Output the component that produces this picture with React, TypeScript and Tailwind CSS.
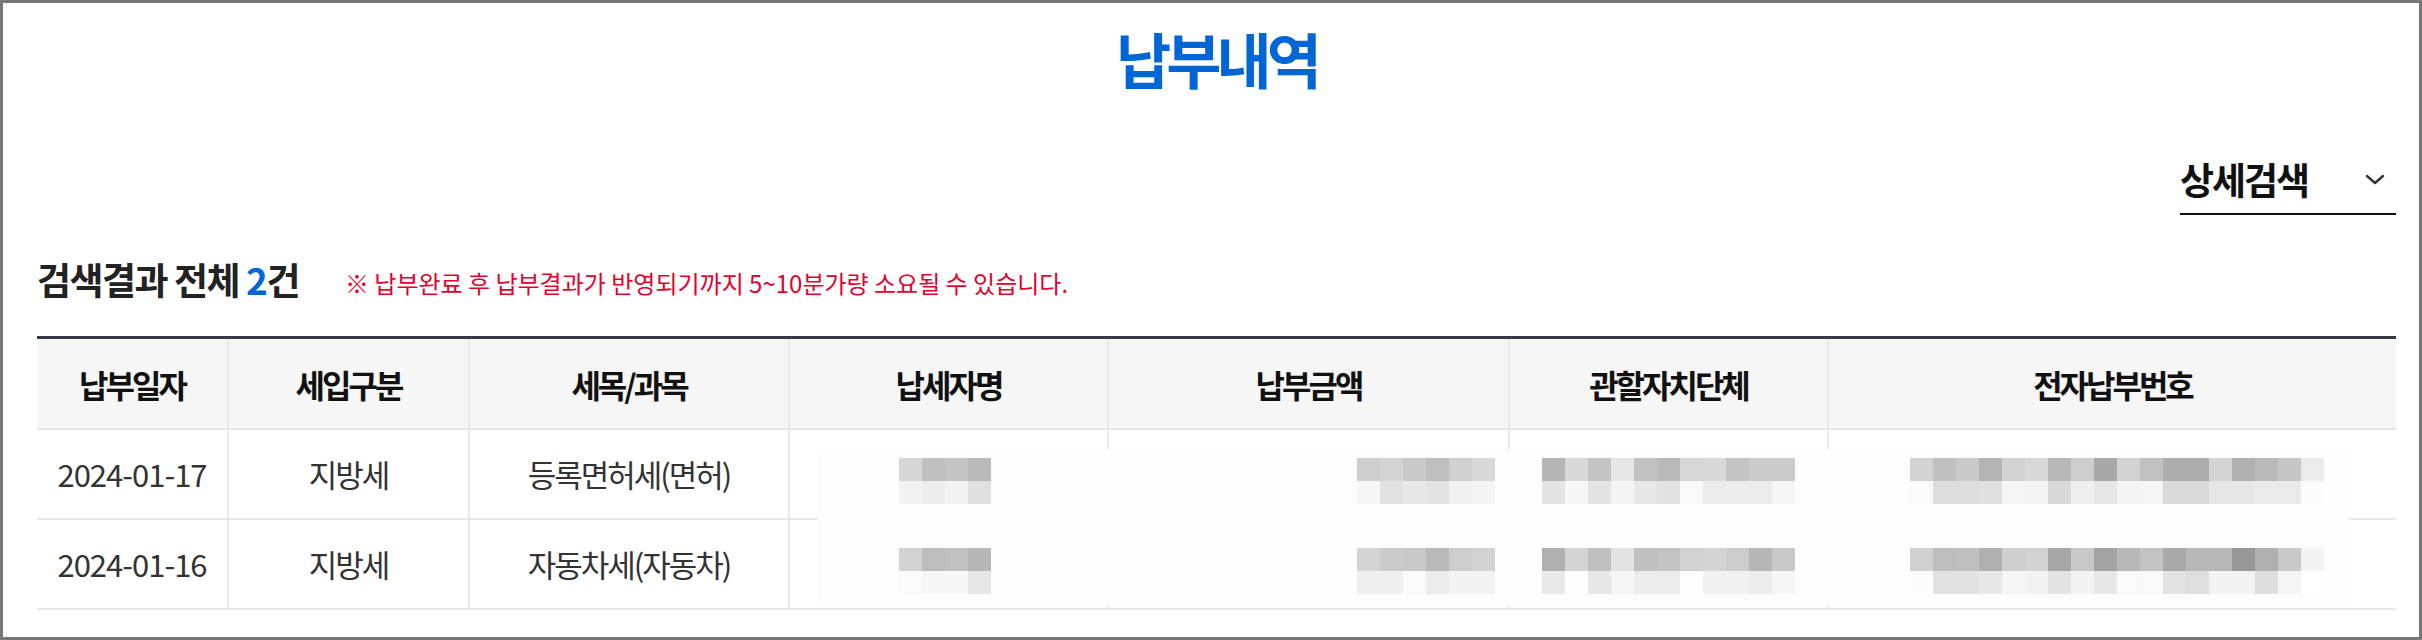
import React from "react";

const cols = "grid-cols-[190px_241px_320px_319px_401px_319px_569px]";

type MosaicProps = { top: string[]; bottom: string[] };
function Mosaic({ top, bottom }: MosaicProps) {
  return (
    <div className="relative z-10 flex flex-col">
      <div className="flex">
        {top.map((c, i) => (
          <div key={i} className="h-[23px] w-[23px]" style={{ backgroundColor: c }} />
        ))}
      </div>
      <div className="flex">
        {bottom.map((c, i) => (
          <div key={i} className="h-[23px] w-[23px]" style={{ backgroundColor: c }} />
        ))}
      </div>
    </div>
  );
}

const rows = [
  {
    date: "2024-01-17",
    kind: "지방세",
    item: "등록면허세(면허)",
    m1: {
      top: ["#d6d6d6", "#c0c0c0", "#c4c4c4", "#bababa"],
      bottom: ["#f2f2f2", "#ededed", "#f3f3f3", "#e0e0e0"],
    },
    m2: {
      top: ["#cfcfcf", "#d4d4d4", "#c9c9c9", "#bebebe", "#d0d0d0", "#d8d8d8"],
      bottom: ["#f7f7f7", "#e2e2e2", "#e8e8e8", "#e4e4e4", "#f1f1f1", "#f4f4f4"],
    },
    m3: {
      top: ["#b5b5b5", "#d9d9d9", "#c4c4c4", "#e6e6e6", "#c2c2c2", "#b9b9b9", "#d7d7d7", "#d9d9d9", "#c4c4c4", "#cbcbcb", "#cbcbcb"],
      bottom: ["#e4e4e4", "#f7f7f7", "#e3e3e3", "#f4f4f4", "#e8e8e8", "#e2e2e2", "#f9f9f9", "#ebebeb", "#ebebeb", "#ebebeb", "#f6f6f6"],
    },
    m4: {
      top: ["#d3d3d3", "#c0c0c0", "#cacaca", "#b4b4b4", "#d2d2d2", "#d8d8d8", "#b8b8b8", "#cdcdcd", "#a8a8a8", "#d3d3d3", "#c1c1c1", "#adadad", "#adadad", "#d4d4d4", "#b1b1b1", "#bababa", "#c6c6c6", "#ebebeb"],
      bottom: ["#fafafa", "#dddddd", "#dddddd", "#e0e0e0", "#f5f5f5", "#f4f4f4", "#d9d9d9", "#efefef", "#e6e6e6", "#f4f4f4", "#f5f5f5", "#dadada", "#dadada", "#e6e6e6", "#e6e6e6", "#eaeaea", "#eaeaea", "#fcfcfc"],
    },
  },
  {
    date: "2024-01-16",
    kind: "지방세",
    item: "자동차세(자동차)",
    m1: {
      top: ["#d2d2d2", "#bdbdbd", "#c2c2c2", "#b7b7b7"],
      bottom: ["#fafafa", "#f6f6f6", "#f6f6f6", "#e6e6e6"],
    },
    m2: {
      top: ["#d4d4d4", "#cbcbcb", "#c8c8c8", "#b9b9b9", "#cdcdcd", "#d3d3d3"],
      bottom: ["#efefef", "#efefef", "#fafafa", "#ececec", "#f3f3f3", "#f3f3f3"],
    },
    m3: {
      top: ["#b0b0b0", "#d4d4d4", "#c0c0c0", "#e3e3e3", "#c0c0c0", "#c4c4c4", "#d2d2d2", "#d4d4d4", "#cccccc", "#b7b7b7", "#c9c9c9"],
      bottom: ["#e9e9e9", "#fdfdfd", "#e7e7e7", "#f5f5f5", "#ececec", "#ececec", "#fefefe", "#f1f1f1", "#f1f1f1", "#ececec", "#f6f6f6"],
    },
    m4: {
      top: ["#d1d1d1", "#bdbdbd", "#bfbfbf", "#b0b0b0", "#cfcfcf", "#d3d3d3", "#a7a7a7", "#c8c8c8", "#a4a4a4", "#b8b8b8", "#c3c3c3", "#a9a9a9", "#b8b8b8", "#b8b8b8", "#989898", "#b0b0b0", "#c9c9c9", "#f3f3f3"],
      bottom: ["#fcfcfc", "#e2e2e2", "#e2e2e2", "#e8e8e8", "#f5f5f5", "#f2f2f2", "#e3e3e3", "#f3f3f3", "#e8e8e8", "#fafafa", "#f9f9f9", "#e3e3e3", "#dfdfdf", "#f3f3f3", "#f3f3f3", "#dedede", "#f5f5f5", "#ffffff"],
    },
  },
];

const headers = ["납부일자", "세입구분", "세목/과목", "납세자명", "납부금액", "관할자치단체", "전자납부번호"];

export default function App() {
  return (
    <div className="h-[640px] w-[2422px] overflow-hidden border-[3px] border-[#777777] bg-white font-['Noto_Sans_CJK_KR','Noto_Sans',sans-serif]">
      <div className="flex flex-col pl-[34px] pr-[23px]">
        <h1 className="pt-[25px] text-center text-[60px] font-bold leading-none tracking-[-5px] text-[#0066d6]">
          납부내역
        </h1>

        <div className="mt-[73px] flex justify-end">
          <button className="flex w-[216px] items-center justify-between border-b-2 border-[#111111] pb-[15px] pr-[10px]">
            <span className="text-[37px] font-bold leading-none tracking-[-2px] text-[#111111]">상세검색</span>
            <svg width="22" height="13" viewBox="0 0 22 13" fill="none">
              <polyline points="3,3 11,10 19,3" stroke="#333333" strokeWidth="2.4" strokeLinecap="round" strokeLinejoin="round" />
            </svg>
          </button>
        </div>

        <div className="mt-[46px] flex items-end gap-[46px]">
          <div className="text-[37px] font-bold leading-none tracking-[-1.5px] text-[#222222]">
            검색결과 전체 <span className="text-[#0066d6]">2</span>건
          </div>
          <div className="pb-[3px] text-[24px] leading-none text-[#e5002d]">
            ※ 납부완료 후 납부결과가 반영되기까지 5~10분가량 소요될 수 있습니다.
          </div>
        </div>

        <div className="relative mt-[38px] border-t-[3px] border-[#363a45]">
          <div className={`grid ${cols} h-[91px] border-b-2 border-[#e6e6e6] bg-[#f6f6f6]`}>
            {headers.map((h, i) => (
              <div
                key={h}
                className={`flex items-center justify-center text-[32px] font-bold tracking-[-3px] text-[#111111] ${i > 0 ? "border-l-2 border-[#e8e8e8]" : ""}`}
              >
                {h}
              </div>
            ))}
          </div>
          {rows.map((r) => (
            <div key={r.date} className={`grid ${cols} h-[90px] border-b-2 border-[#e8e8e8]`}>
              <div className="flex items-center justify-center text-[31px] tracking-[-1px] text-[#333333]">{r.date}</div>
              <div className="flex items-center justify-center border-l-2 border-[#e8e8e8] text-[31px] tracking-[-2px] text-[#333333]">{r.kind}</div>
              <div className="flex items-center justify-center border-l-2 border-[#e8e8e8] text-[31px] tracking-[-2px] text-[#333333]">{r.item}</div>
              <div className="flex items-start justify-center border-l-2 border-[#e8e8e8] pt-[28px] pr-[8px]">
                <Mosaic {...r.m1} />
              </div>
              <div className="flex items-start justify-end border-l-2 border-[#e8e8e8] pt-[28px] pr-[13px]">
                <Mosaic {...r.m2} />
              </div>
              <div className="flex items-start justify-center border-l-2 border-[#e8e8e8] pt-[28px]">
                <Mosaic {...r.m3} />
              </div>
              <div className="flex items-start justify-center border-l-2 border-[#e8e8e8] pt-[28px] pl-[8px]">
                <Mosaic {...r.m4} />
              </div>
            </div>
          ))}
          <div className="absolute left-[781px] top-[110px] z-[5] h-[157px] w-[1530px] bg-[#fdfdfd]" />
        </div>
      </div>
    </div>
  );
}
